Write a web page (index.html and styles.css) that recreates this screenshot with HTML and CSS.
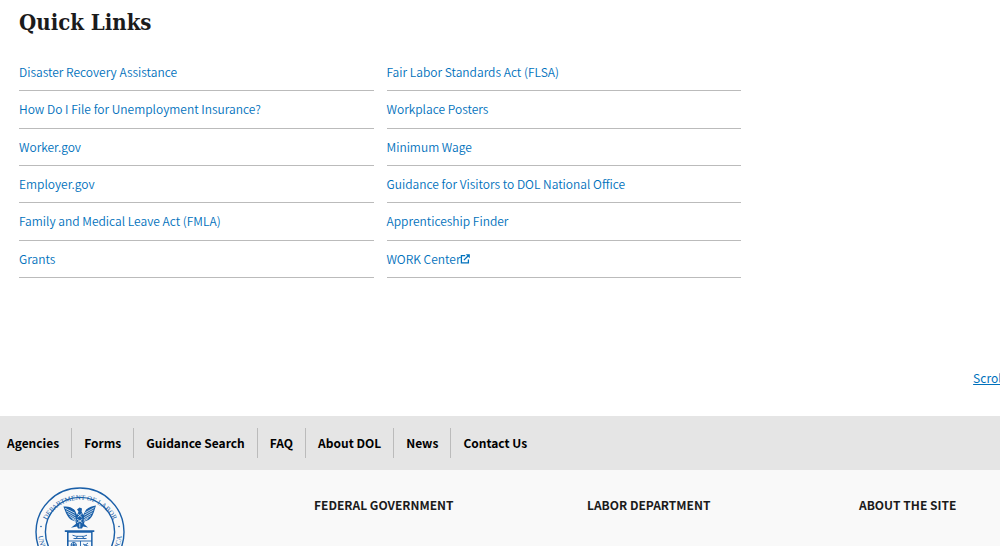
FILE: index.html
```html
<!DOCTYPE html>
<html lang="en">
<head>
<meta charset="utf-8">
<meta name="viewport" content="width=device-width, initial-scale=1">
<title>U.S. Department of Labor</title>
<link rel="stylesheet" href="styles.css">
</head>
<body>
<main class="main">
  <section class="quick-links">
    <h2 class="section-title">Quick Links</h2>
    <ul class="link-list">
      <li><a href="#">Disaster Recovery Assistance</a></li>
      <li><a href="#">Fair Labor Standards Act (FLSA)</a></li>
      <li><a href="#">How Do I File for Unemployment Insurance?</a></li>
      <li><a href="#">Workplace Posters</a></li>
      <li><a href="#">Worker.gov</a></li>
      <li><a href="#">Minimum Wage</a></li>
      <li><a href="#">Employer.gov</a></li>
      <li><a href="#">Guidance for Visitors to DOL National Office</a></li>
      <li><a href="#">Family and Medical Leave Act (FMLA)</a></li>
      <li><a href="#">Apprenticeship Finder</a></li>
      <li><a href="#">Grants</a></li>
      <li><a href="#">WORK Center<svg class="external" viewBox="0 0 10 10" aria-hidden="true"><path d="M5.2 1.7H1.4v7.1h7V5.4M3.9 6.1L8 2" fill="none" stroke="currentColor" stroke-width="1.3"/><path d="M5.7.2H9.8V4.3Z" fill="currentColor"/></svg></a></li>
    </ul>
  </section>
  <div class="scroll-row"><a class="scroll-top" href="#">Scroll to Top</a></div>
</main>
<footer class="footer">
  <nav class="footer-nav" aria-label="Footer">
    <a href="#">Agencies</a>
    <a href="#">Forms</a>
    <a href="#">Guidance Search</a>
    <a href="#">FAQ</a>
    <a href="#">About DOL</a>
    <a href="#">News</a>
    <a href="#">Contact Us</a>
  </nav>
  <div class="footer-columns">
    <svg class="seal" viewBox="0 0 90 90" role="img" aria-label="Department of Labor seal">
      <defs>
        <path id="arc-top" d="M7.8 50A37.2 37.2 0 1 1 82.2 50"/>
        <path id="arc-bottom" d="M3.1 45A41.9 41.9 0 0 0 86.9 45"/>
      </defs>
      <g fill="none" stroke="#1a5fa8">
        <circle cx="45" cy="45" r="44" stroke-width="1.4"/>
        <circle cx="45" cy="45" r="34.6" stroke-width="1.4"/>
      </g>
      <g class="seal-text">
        <text text-anchor="middle"><textPath href="#arc-top" startOffset="50%">DEPARTMENT OF LABOR</textPath></text>
        <text><textPath href="#arc-bottom" startOffset="3%">UNITED STATES</textPath></text>
        <text text-anchor="end"><textPath href="#arc-bottom" startOffset="97%">OF AMERICA</textPath></text>
      </g>
      <g fill="#1a5fa8">
        <circle cx="6" cy="39.5" r=".8"/><circle cx="84" cy="39.5" r=".8"/>
        <path d="M28.4 19.5C33 19 37 20 40 23.5L42 28 43.5 24.5 42 22.5 44.5 20.4 47 21.5 46.6 24.5 48.2 28 51 22.8C54 19.5 57.5 19 61 18.4 59 24.5 58 30 53.5 33L49.5 34.5 49 37 53 40.5 48 39.5 47 41.6H43L42 39.5 36 40.8 41 36.8 40.5 34.5 36.5 33C32 30 30.5 25 28.4 19.5Z"/>
        <path d="M29.8 43.2H59.3V45H57.6V73C53 77 48 78 45 81 41 78 36 77 32 73V45H29.8Z"/>
      </g>
      <path d="M33.6 45.8H56.1V72C52 75 48 76 45 78 41 76 37 75 33.6 72Z" fill="#f4f8fc"/>
      <g fill="none" stroke="#e6f0f8" stroke-width=".8" stroke-linecap="round">
        <path d="M30.5 21.5L39.5 26M31.5 24L40 28.5M33 26.6L40.5 31M34.8 29.4L41 33M37 31.6L41 34.4M59 20.8L50.5 25.5M58 23.4L49.5 28M57 26L49.3 30.5M55.5 28.8L49 32.6M53 31.5L49 34M43 27L46.5 30M46.5 27L43 30M42.5 32.5L47 35.5M47 32.5L42.5 35.5M44.8 37V40"/>
      </g>
      <g fill="none" stroke="#1a5fa8" stroke-width=".9">
        <path d="M37.5 48.2L41 49.3H49L52 48.2M40 52L43 49.4M50 52L47 49.4M38.5 51.5H51.5M33 54H57M45.5 54V60"/>
        <circle cx="38.7" cy="58" r="2.6"/><circle cx="38.7" cy="58" r=".8"/><path d="M38.7 55V61M35.7 58H41.7M48 57L54 59.5M48 60L53 56"/>
      </g>
    </svg>
    <h3>Federal Government</h3>
    <h3>Labor Department</h3>
    <h3>About the Site</h3>
  </div>
</footer>
</body>
</html>
```
FILE: styles.css
```css
* { box-sizing: border-box; }

body {
  margin: 0;
  height: 100vh;
  overflow: hidden;
  background: #fff;
  color: #1b1b1b;
  font-family: "Noto Sans CJK SC", "Open Sans", sans-serif;
  font-size: 12px;
  line-height: 20px;
}

a { color: #0071bc; text-decoration: none; }

.quick-links { width: 75%; padding: 8px 9px 0 19px; }

.section-title {
  margin: 0 0 18px;
  font-family: "DejaVu Serif Condensed", "DejaVu Serif", serif;
  font-size: 22px;
  line-height: 28px;
  font-weight: 700;
}

.link-list {
  display: grid;
  grid-template-columns: 1fr 1fr;
  grid-auto-rows: 1fr;
  column-gap: 13px;
  min-height: 224px;
  margin: 0;
  padding: 0;
  list-style: none;
  font-weight: 350;
}

.link-list li {
  padding-top: 8px;
  border-bottom: 1px solid #bbb;
}

.external { width: 10px; height: 10px; }

.scroll-row {
  display: flex;
  justify-content: flex-end;
  overflow: hidden;
  padding: 90px 0 28px;
}

.scroll-top {
  margin-right: -43px;
  text-decoration: underline;
  white-space: nowrap;
}

.footer { background: #f9f9f9; }

.footer-nav {
  display: flex;
  padding: 12px 0;
  background: #e5e5e5;
  font-weight: 700;
}

.footer-nav a {
  padding: 5px 12px;
  color: #000;
  white-space: nowrap;
}

.footer-nav a:first-child { padding-left: 7px; }
.footer-nav a + a { border-left: 1px solid #bbb; }

.footer-columns {
  display: grid;
  grid-template-columns: 279fr 273fr 272fr 141fr;
  align-items: start;
  padding: 17px 0 40px 35px;
}

.footer-columns h3 {
  margin: 8px 0 0;
  font-size: 12px;
  line-height: 20px;
  text-transform: uppercase;
  white-space: nowrap;
}

.seal { width: 90px; height: 90px; }

.seal-text {
  fill: #1a5fa8;
  font-family: "Liberation Serif", serif;
  font-size: 7px;
}
```
